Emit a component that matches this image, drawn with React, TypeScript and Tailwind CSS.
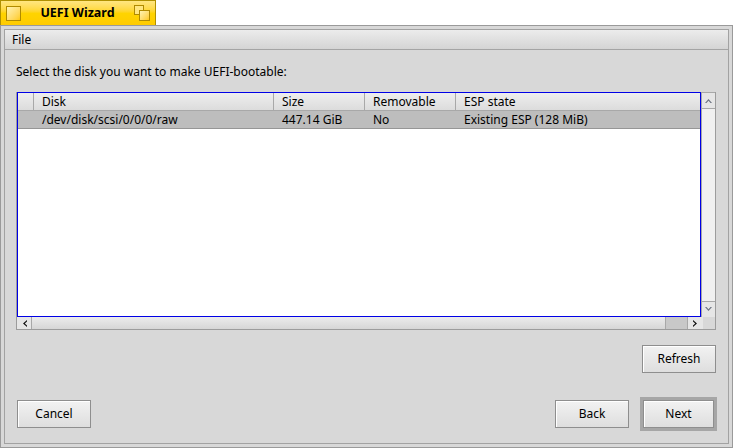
import React from 'react';

const font = { fontFamily: '"Noto Sans", "DejaVu Sans", sans-serif' };

const Button: React.FC<{ label: string; className?: string }> = ({ label, className = '' }) => (
  <div
    className={`flex items-center justify-center h-[28px] border border-[#8e8e8e] bg-gradient-to-b from-[#f2f2f2] to-[#dedede] text-[12px] text-black shadow-[inset_1px_1px_0_#ffffff] ${className}`}
  >
    {label}
  </div>
);

const columns = [
  { name: '', w: 'w-[16px]' },
  { name: 'Disk', w: 'w-[240px]' },
  { name: 'Size', w: 'w-[91px]' },
  { name: 'Removable', w: 'w-[91px]' },
  { name: 'ESP state', w: 'flex-1' },
];

const row = ['', '/dev/disk/scsi/0/0/0/raw', '447.14 GiB', 'No', 'Existing ESP (128 MiB)'];

const Arrow: React.FC<{ dir: 'up' | 'down' | 'left' | 'right'; dark?: boolean }> = ({ dir, dark }) => {
  const rot = { up: 0, right: 90, down: 180, left: 270 }[dir];
  return (
    <svg width="9" height="9" viewBox="0 0 9 9" style={{ transform: `rotate(${rot}deg)` }}>
      <path d="M1 7 L4.5 3 L8 7 L6.5 7 L4.5 4.8 L2.5 7 Z" fill={dark ? '#111' : '#6b7280'} />
    </svg>
  );
};

export default function App() {
  return (
    <div className="w-[733px] h-[448px] bg-white overflow-hidden" style={font}>
      {/* tab */}
      <div className="flex items-center w-[156px] h-[25px] border border-b-0 border-[#b09000] bg-gradient-to-b from-[#ffe680] via-[#ffd400] to-[#ffcb00] px-[5px]">
        <div className="w-[15px] h-[15px] border border-[#b08a00] bg-gradient-to-br from-[#fff3b0] to-[#ffcb00]" />
        <div className="flex-1 text-center text-[12.5px] font-bold text-black">UEFI Wizard</div>
        <div className="relative w-[16px] h-[16px]">
          <div className="absolute left-0 top-0 w-[10px] h-[10px] border border-[#b08a00] bg-[#ffe680]" />
          <div className="absolute left-[5px] top-[5px] w-[11px] h-[11px] border border-[#b08a00] bg-gradient-to-br from-[#fff3b0] to-[#ffcb00]" />
        </div>
      </div>

      {/* window frame */}
      <div className="h-[423px] border border-[#9a9a9a] bg-[#d8d8d8] p-[3px]">
        <div className="h-full border border-[#a2a2a2] bg-[#d8d8d8] flex flex-col">
          {/* menu bar */}
          <div className="h-[20px] flex items-center px-[7px] bg-gradient-to-b from-[#ececec] to-[#d4d4d4] border-b border-[#a4a4a4] text-[12px] text-black">
            File
          </div>

          <div className="pl-[11px] pt-[14px] text-[12px] text-black leading-[16px]">
            Select the disk you want to make UEFI-bootable:
          </div>

          {/* list */}
          <div className="ml-[11px] mt-[12px] w-[700px] h-[238px] border border-[#9c9c9c] border-t-0 flex flex-col">
            <div className="flex h-[225px]">
              <div className="w-[686px] border border-[#0000e6] bg-white flex flex-col">
                <div className="flex h-[18px] bg-gradient-to-b from-[#eeeeee] to-[#dcdcdc] border-b border-[#a8a8a8] text-[12px] text-black">
                  {columns.map((c, i) => (
                    <div
                      key={i}
                      className={`${c.w} flex items-center pl-[8px] ${i < columns.length - 1 ? 'border-r border-[#a8a8a8]' : ''}`}
                    >
                      {c.name}
                    </div>
                  ))}
                </div>
                <div className="flex h-[18px] bg-[#bdbdbd] border-b border-[#969696] text-[12px] text-black">
                  {row.map((v, i) => (
                    <div key={i} className={`${columns[i].w} flex items-center pl-[8px] whitespace-nowrap`}>
                      {v}
                    </div>
                  ))}
                </div>
              </div>
              {/* vertical scrollbar */}
              <div className="w-[14px] flex flex-col bg-[#f0f0f0] border-l border-[#a8a8a8] border-t border-[#9c9c9c]">
                <div className="h-[16px] flex items-center justify-center bg-[#e6e6e6] border-b border-[#a8a8a8]">
                  <Arrow dir="up" />
                </div>
                <div className="flex-1" />
                <div className="h-[16px] flex items-center justify-center bg-[#e6e6e6] border-t border-[#a8a8a8]">
                  <Arrow dir="down" />
                </div>
              </div>
            </div>
            {/* horizontal scrollbar */}
            <div className="flex h-[12px] w-[686px]">
              <div className="w-[15px] flex items-center justify-center bg-[#e6e6e6] border-r border-[#a8a8a8]">
                <Arrow dir="left" dark />
              </div>
              <div className="w-[634px] bg-gradient-to-b from-[#ececec] to-[#d6d6d6] border-r border-[#a8a8a8]" />
              <div className="flex-1 bg-[#c8c8c8] border-r border-[#a8a8a8]" />
              <div className="w-[15px] flex items-center justify-center bg-[#e6e6e6]">
                <Arrow dir="right" dark />
              </div>
            </div>
          </div>

          <div className="flex justify-end pr-[12px] mt-[15px]">
            <Button label="Refresh" className="w-[74px]" />
          </div>

          <div className="flex items-center justify-between pl-[12px] pr-[11px] mt-[24px]">
            <Button label="Cancel" className="w-[74px]" />
            <div className="flex items-center gap-[11px]">
              <Button label="Back" className="w-[74px]" />
              <div className="border-[3px] border-[#a6a6a6] p-0">
                <Button label="Next" className="w-[71px] border-[#4a4a4a]" />
              </div>
            </div>
          </div>
        </div>
      </div>
    </div>
  );
}
